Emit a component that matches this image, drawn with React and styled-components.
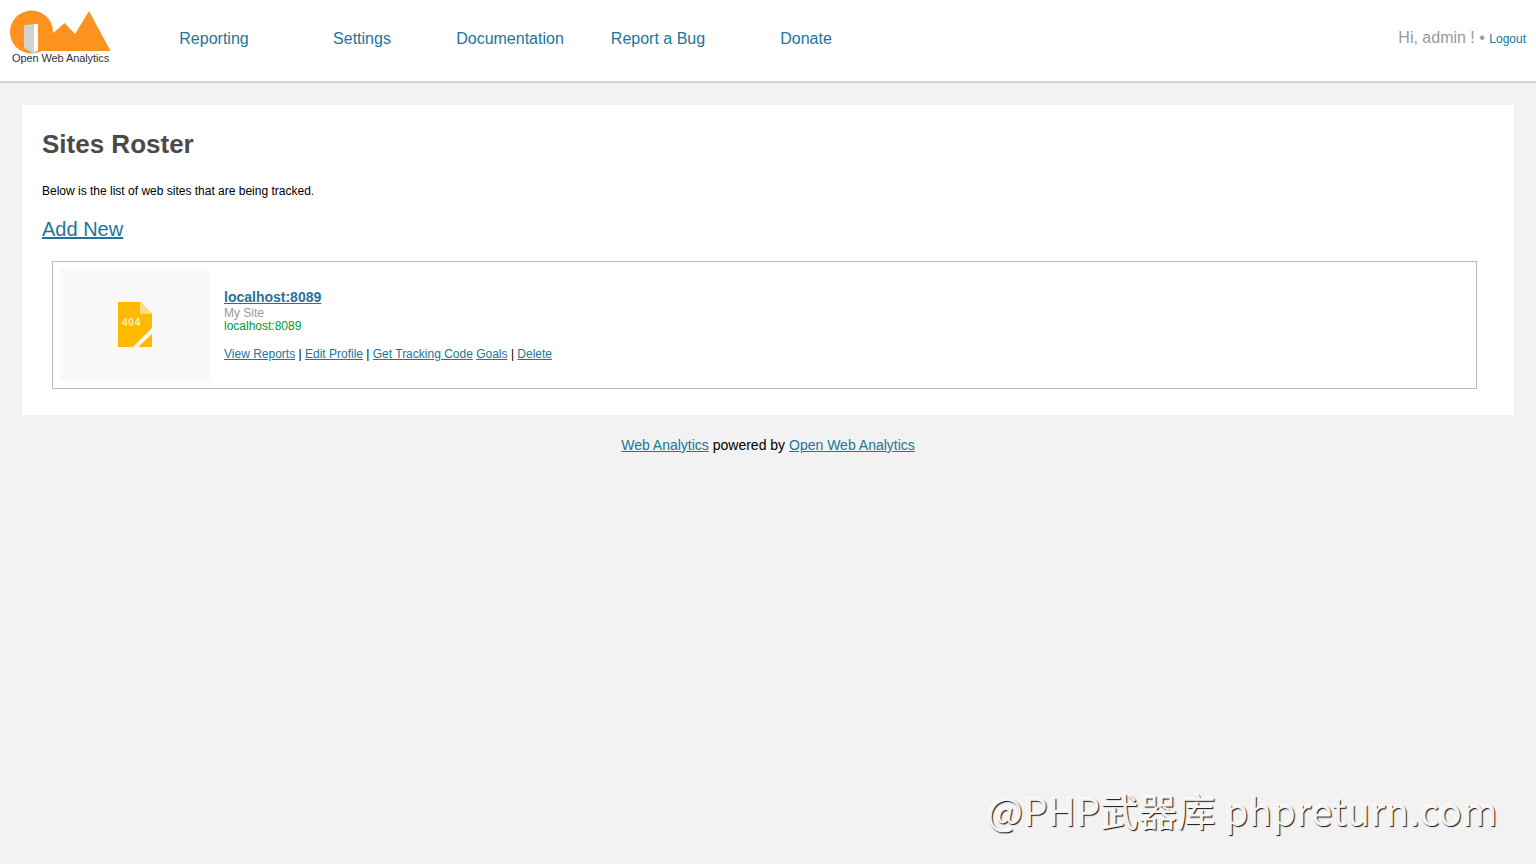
import React from "react";
import styled, { createGlobalStyle } from "styled-components";

const GlobalStyle = createGlobalStyle`
  html, body {
    margin: 0;
    padding: 0;
    background-color: #f2f2f2;
    font-family: "Liberation Sans", Arial, sans-serif;
    color: #000;
  }
  a {
    color: #21759b;
  }
`;

const Page = styled.div`
  position: relative;
  height: 864px;
  overflow: hidden;
`;

const Header = styled.header`
  display: flex;
  align-items: flex-start;
  height: 81px;
  background-color: #fff;
  border-bottom: 2px solid #d5d5d5;
`;

const LogoBox = styled.div`
  position: relative;
  width: 140px;
  height: 81px;
  flex-shrink: 0;
`;

const LogoText = styled.span`
  position: absolute;
  left: 12px;
  top: 52px;
  font-size: 11px;
  line-height: 13px;
  letter-spacing: -0.1px;
  color: #333;
  white-space: nowrap;
`;

const Nav = styled.nav`
  display: flex;
  padding-top: 29px;
`;

const NavLink = styled.a`
  width: 148px;
  text-align: center;
  font-size: 16px;
  line-height: 19px;
  text-decoration: none;
`;

const UserBox = styled.div`
  margin-left: auto;
  padding: 28px 10px 0 0;
  font-size: 16px;
  line-height: 19px;
  color: #999;
`;

const Logout = styled.a`
  font-size: 12px;
  text-decoration: none;
`;

const Panel = styled.main`
  margin: 22px 22px 0;
  padding: 20px 20px 26px;
  background-color: #fff;
`;

const Title = styled.h1`
  margin: 0;
  font-size: 26px;
  line-height: 38px;
  font-weight: bold;
  color: #4a4a4a;
`;

const Intro = styled.p`
  margin: 20px 0 0;
  font-size: 12px;
  line-height: 16px;
`;

const AddNew = styled.a`
  display: block;
  width: fit-content;
  margin-top: 18px;
  font-size: 20px;
  line-height: 24px;
`;

const SiteCard = styled.div`
  display: flex;
  gap: 14px;
  margin: 20px 17px 0 10px;
  padding: 7px;
  border: 1px solid #bbb;
`;

const Thumb = styled.div`
  display: flex;
  align-items: center;
  justify-content: center;
  width: 150px;
  height: 110px;
  padding-bottom: 2px;
  background-color: #f9f9f9;
`;

const SiteInfo = styled.div`
  padding-top: 20px;
  font-size: 12px;
  line-height: 13px;
`;

const SiteName = styled.a`
  display: block;
  width: fit-content;
  font-size: 14px;
  line-height: 16px;
  font-weight: bold;
`;

const SiteLabel = styled.div`
  margin-top: 2px;
  color: #999;
`;

const SiteUrl = styled.div`
  color: #009933;
`;

const SiteActions = styled.div`
  margin-top: 14px;
  line-height: 14px;
`;

const Footer = styled.footer`
  margin-top: 21px;
  text-align: center;
  font-size: 14px;
  line-height: 18px;
`;

const Watermark = styled.div`
  position: absolute;
  left: 987px;
  top: 783px;
  font-family: "Noto Sans CJK SC", "Noto Sans", sans-serif;
  font-size: 38px;
  line-height: 54px;
  letter-spacing: 0.45px;
  white-space: nowrap;
  color: #f4f4f4;
  text-shadow: 1px 1px 1px #111, -1px -1px 0 #fff;
`;

function OwaLogo() {
  return (
    <svg width="110" height="60" viewBox="0 0 110 60" aria-hidden="true">
      <circle cx="31.5" cy="32" r="21.5" fill="#fd921f" />
      <path d="M52 34 L64.5 23 L75 34 L89 11 L110.5 51 L36 51 L36 34 Z" fill="#fd921f" />
      <path d="M24 25 L38 24 L38 50 L34 54 L24 48 Z" fill="#d2d2d2" />
      <path d="M34 24 L38 24 L38 51 L34 51 Z" fill="#fff" />
    </svg>
  );
}

function FileIcon() {
  return (
    <svg width="34" height="45" viewBox="0 0 34 45" aria-hidden="true">
      <path d="M0 0 H22 L34 12 V26 L15 45 H0 Z" fill="#ffb900" />
      <path d="M22 0 L34 12 H22 Z" fill="#ffd98a" />
      <path d="M34 32 V45 H20 Z" fill="#ffb900" />
      <text x="4" y="24" fontFamily="Liberation Sans" fontSize="10" fontWeight="bold" letterSpacing="0.8" fill="#ffeec8">
        404
      </text>
    </svg>
  );
}

const navItems = ["Reporting", "Settings", "Documentation", "Report a Bug", "Donate"];

export default function App() {
  return (
    <Page>
      <GlobalStyle />
      <Header>
        <LogoBox>
          <OwaLogo />
          <LogoText>Open Web Analytics</LogoText>
        </LogoBox>
        <Nav>
          {navItems.map((item) => (
            <NavLink href="#" key={item}>
              {item}
            </NavLink>
          ))}
        </Nav>
        <UserBox>
          Hi, admin ! • <Logout href="#">Logout</Logout>
        </UserBox>
      </Header>
      <Panel>
        <Title>Sites Roster</Title>
        <Intro>Below is the list of web sites that are being tracked.</Intro>
        <AddNew href="#">Add New</AddNew>
        <SiteCard>
          <Thumb>
            <FileIcon />
          </Thumb>
          <SiteInfo>
            <SiteName href="#">localhost:8089</SiteName>
            <SiteLabel>My Site</SiteLabel>
            <SiteUrl>localhost:8089</SiteUrl>
            <SiteActions>
              <a href="#">View Reports</a> | <a href="#">Edit Profile</a> |{" "}
              <a href="#">Get Tracking Code</a> <a href="#">Goals</a> |{" "}
              <a href="#">Delete</a>
            </SiteActions>
          </SiteInfo>
        </SiteCard>
      </Panel>
      <Footer>
        <a href="#">Web Analytics</a> powered by <a href="#">Open Web Analytics</a>
      </Footer>
      <Watermark>@PHP武器库 phpreturn.com</Watermark>
    </Page>
  );
}
